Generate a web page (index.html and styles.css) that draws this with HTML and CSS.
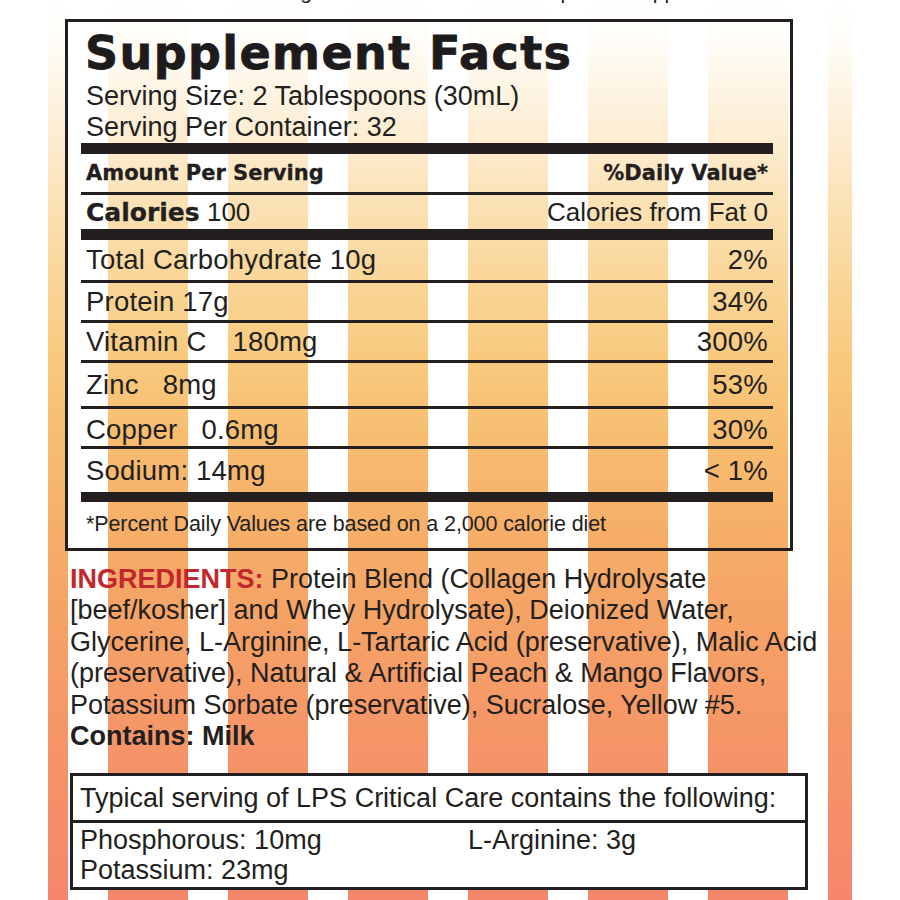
FILE: index.html
```html
<!DOCTYPE html>
<html lang="en">
<head>
<meta charset="utf-8">
<title>Supplement Facts</title>
<link rel="stylesheet" href="styles.css">
</head>
<body>
<div class="page">
  <div class="panel">
    <div class="lead"><span>It is made with collagen and the whole milk in a protein supplement</span></div>

    <section class="facts">
      <h1 class="facts-title">Supplement Facts</h1>
      <p class="serving">Serving Size: 2 Tablespoons (30mL)</p>
      <p class="serving">Serving Per Container: 32</p>
      <div class="bar"></div>
      <div class="row row--head"><span class="heavy">Amount Per Serving</span><span class="heavy">%Daily Value*</span></div>
      <div class="row row--cal"><span><b class="heavy cal">Calories</b> 100</span><span>Calories from Fat 0</span></div>
      <div class="bar"></div>
      <div class="nutrients">
        <div class="nrow"><span>Total Carbohydrate 10g</span><span>2%</span></div>
        <div class="nrow"><span>Protein 17g</span><span>34%</span></div>
        <div class="nrow"><span>Vitamin C<span class="amt amt--vit">180mg</span></span><span>300%</span></div>
        <div class="nrow nrow--tall"><span>Zinc<span class="amt amt--zinc">8mg</span></span><span>53%</span></div>
        <div class="nrow nrow--low"><span>Copper<span class="amt amt--cu">0.6mg</span></span><span>30%</span></div>
        <div class="nrow nrow--tall"><span>Sodium: 14mg</span><span>&lt; 1%</span></div>
      </div>
      <div class="bar bar--thin"></div>
      <p class="note">*Percent Daily Values are based on a 2,000 calorie diet</p>
    </section>

    <p class="ingredients"><b class="ing-label">INGREDIENTS:</b> Protein Blend (Collagen Hydrolysate<br>[beef/kosher] and Whey Hydrolysate), Deionized Water,<br>Glycerine, L-Arginine, L-Tartaric Acid (preservative), Malic Acid<br>(preservative), Natural &amp; Artificial Peach &amp; Mango Flavors,<br>Potassium Sorbate (preservative), Sucralose, Yellow #5.<br><b>Contains: Milk</b></p>

    <section class="typical">
      <div class="typical-head">Typical serving of LPS Critical Care contains the following:</div>
      <div class="typical-body">
        <span>Phosphorous: 10mg</span>
        <span>L-Arginine: 3g</span>
        <span>Potassium: 23mg</span>
      </div>
    </section>
  </div>
</div>
</body>
</html>
```
FILE: styles.css
```css
html, body {
  margin: 0;
  padding: 0;
  background: #fff;
}

.page {
  width: 900px;
  height: 900px;
  overflow: hidden;
  background: #fff;
  font-family: "Liberation Sans", Arial, sans-serif;
  color: #231f20;
}

.panel {
  margin: 0 48px;
  height: 900px;
  background:
    repeating-linear-gradient(90deg, transparent 0 20px, #fff 20px 60px, transparent 60px 120px),
    linear-gradient(180deg, #ffffff 0, #fffcf6 45px, #fdf1dc 110px, #fbe4bb 190px, #f9d79b 270px, #f8cb80 350px, #f7be70 430px, #f6b069 520px, #f5a266 620px, #f59568 740px, #f4876a 900px);
  overflow: hidden;
}

.lead {
  height: 19px;
  overflow: hidden;
  padding-left: 69px;
  font-size: 21px;
}

.lead span {
  display: block;
  line-height: 21px;
  margin-top: -19px;
  white-space: nowrap;
}

/* Supplement facts box */
.facts {
  margin-left: 17px;
  width: 728px;
  box-sizing: border-box;
  border: 3px solid #231f20;
  padding: 8px 17px 0 13px;
}

.facts-title {
  margin: 0;
  padding-left: 4px;
  font-family: "DejaVu Sans", "Liberation Sans", sans-serif;
  font-weight: bold;
  font-size: 46px;
  line-height: 46px;
  letter-spacing: 1.4px;
  -webkit-text-stroke: 0.8px #1e1b1c;
  color: #1e1b1c;
}

.serving {
  margin: 0;
  padding-left: 5px;
  font-size: 27px;
  line-height: 31px;
}

.facts-title + .serving {
  margin-top: 5px;
}

.bar {
  height: 11px;
  background: #231f20;
}

.bar--thin {
  height: 10px;
}

.row {
  display: flex;
  justify-content: space-between;
  align-items: center;
  padding: 0 5px;
}

.row--head {
  height: 38px;
}

.row--cal {
  height: 34px;
  border-top: 3px solid #231f20;
  font-size: 26px;
}

.heavy {
  font-family: "DejaVu Sans", "Liberation Sans", sans-serif;
  font-weight: bold;
  font-size: 21px;
  -webkit-text-stroke: 0.3px #231f20;
}

.cal {
  font-size: 25px;
}

.nrow {
  display: flex;
  justify-content: space-between;
  align-items: center;
  padding: 0 5px;
  height: 37px;
  border-top: 3px solid #231f20;
  font-size: 27.5px;
  letter-spacing: 0.2px;
}

.nrow:first-child {
  height: 40px;
  border-top: none;
}

.nrow--tall {
  height: 43px;
}

.nrow--low {
  padding-top: 4px;
  height: 33px;
}

.amt--vit { margin-left: 26px; }
.amt--zinc { margin-left: 24px; }
.amt--cu { margin-left: 24px; }

.note {
  margin: 0;
  height: 46px;
  padding-left: 5px;
  font-size: 21.5px;
  line-height: 44px;
  letter-spacing: -0.1px;
}

/* Ingredients */
.ingredients {
  margin: 13px 0 0 22px;
  font-size: 27px;
  line-height: 31.4px;
  white-space: nowrap;
}

.ing-label {
  color: #c1272d;
}

/* Typical serving box */
.typical {
  margin: 21px 0 0 22px;
  width: 738px;
  box-sizing: border-box;
  border: 3px solid #231f20;
  background: #fff;
  font-size: 27px;
}

.typical-head {
  height: 44px;
  line-height: 44px;
  padding-left: 7px;
  border-bottom: 3px solid #231f20;
}

.typical-body {
  display: grid;
  grid-template-columns: 388px 1fr;
  padding: 2px 7px 2px 7px;
  line-height: 30px;
}
```
